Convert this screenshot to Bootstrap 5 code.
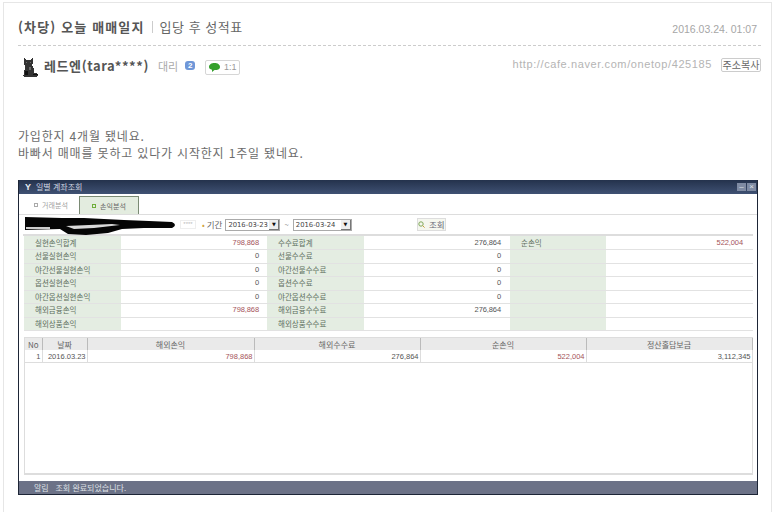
<!DOCTYPE html>
<html lang="ko">
<head>
    <meta charset="UTF-8">
    <title>(차당) 오늘 매매일지</title>
    <link href="https://cdn.jsdelivr.net/npm/bootstrap@5.3.0/dist/css/bootstrap.min.css" rel="stylesheet">
    <style>
        html, body { height: 512px; overflow: hidden; background: #fff; }
        body { font-family: "Noto Sans CJK KR", "Liberation Sans", sans-serif; font-size: 12px; color: #666; }

        /* post frame */
        .post-frame { margin: 2px 4px 0 3px; height: 510px; padding: 0 10px 0 14px; border: 1px solid #e6e6e6; border-bottom: 0; overflow: hidden; }
        .post-head { height: 43px; padding-top: 5px; border-bottom: 1px dashed #ccc; line-height: 20px; }
        .post-title { font-size: 13px; font-weight: 700; color: #555; letter-spacing: 1.15px; }
        .post-sep { width: 1px; height: 12px; margin: 0 7px 0 7px; background: #ccc; }
        .post-cat { font-size: 13px; color: #666; letter-spacing: .5px; }
        .post-date { font-family: "Liberation Sans", sans-serif; font-size: 10.5px; color: #a6a6a6; padding-right: 4px; margin-top: 4px; }
        .author-row { height: 38px; padding-top: 11px; }
        .author-name { margin-left: 3px; font-size: 13px; font-weight: 700; color: #555; letter-spacing: .6px; line-height: 18px; }
        .author-rank { margin-left: 9px; font-size: 11px; color: #aaa; line-height: 18px; }
        .rank-badge { width: 10px; height: 9px; margin-left: 7px; margin-top: 4px; border-radius: 3px; background: #6f97d8; color: #fff; font: 700 8px/9px "Liberation Sans", sans-serif; text-align: center; }
        .chat-btn { margin-left: 10px; margin-top: 3px; width: 35px; height: 15px; border: 1px solid #d6d6d6; border-radius: 2px; font: 9px/13px "Liberation Sans", sans-serif; color: #999; }
        .post-url { font-family: "Liberation Sans", sans-serif; font-size: 11px; color: #b4b4b4; letter-spacing: .6px; line-height: 14px; }
        .copy-btn { margin-left: 9px; margin-top: 1px; width: 40px; height: 14px; border: 1px solid #ccc; border-radius: 2px; font-size: 10px; line-height: 12px; text-align: center; color: #666; }
        .post-body { margin-top: 43px; font-size: 12px; line-height: 17px; color: #6c6c6c; letter-spacing: .82px; }

        /* trading window */
        .trade-win { position: relative; width: 740px; height: 315px; margin-top: 19px; border: 1px solid #1d2536; border-width: 0 1px 1px 1px; background: #fff; font-size: 8px; color: #666; }
        .win-title { height: 14px; padding: 0 1px 0 5px; background: linear-gradient(#24324c, #3f5173); color: #cfd5e0; line-height: 14px; }
        .win-logo { width: 8px; height: 8px; margin-right: 4px; color: #e8ecf4; font: 700 9px/8px "Liberation Sans", sans-serif; text-align: center; }
        .win-ctl { width: 9px; height: 8px; margin-left: 1px; background: #7f8ba3; color: #dfe3ea; font: 8px/8px "Liberation Sans", sans-serif; text-align: center; }
        .win-tabs { height: 21px; padding: 2px 0 0 4px; border-bottom: 1px solid #ddd; }
        .win-tab { width: 56px; height: 18px; line-height: 18px; color: #a0a0a0; text-align: center; font-size: 7px; }
        .win-tab-on { width: 60px; border: 1px solid #7a8a74; border-width: 1px 1px 0 1px; background: #e3ecdf; color: #666; }
        .tab-dot { display: inline-block; width: 4px; height: 4px; margin-right: 4px; border: 1px solid #aaa; vertical-align: 1px; }
        .win-tab-on .tab-dot { border-color: #6fae3a; }
        .win-tools { position: relative; height: 21px; margin: 0 4px; padding-left: 157px; border-bottom: 2px solid #ddd; }
        .mask-box { width: 16px; height: 9px; margin-right: 6px; color: #bbb; font: 6px/7px "Liberation Sans", sans-serif; text-align: center; border: 1px solid #eee; }
        .period-dot { color: #d0a23a; margin-right: 2px; }
        .tools-label { margin-right: 3px; font-size: 8.5px; }
        .date-box { width: 55px; height: 12px; padding-left: 2px; border: 1px solid #aaa; font: 6.8px/10px "DejaVu Sans", sans-serif; color: #444; }
        .date-box-b { width: 59px; }
        .date-arrow { width: 10px; height: 10px; background: #eee; border-right: 1px solid #777; border-bottom: 1px solid #777; font-size: 5px; line-height: 9px; text-align: center; color: #111; }
        .tools-tilde { margin: 0 4px; }
        .search-btn { margin-left: 65px; width: 29px; height: 13px; border: 1px solid #ddd; background: #f5f7ef; line-height: 11px; font-size: 8.5px; color: #667; }
        .scribble { position: absolute; left: 1px; top: 2px; }

        .sum-table { table-layout: fixed; width: 729px; margin: 0 0 0 5px; border-collapse: collapse; font-size: 7.5px; }
        .sum-table td { height: 13.5px; padding: 0; border-bottom: 1px solid #e2e2e2; line-height: 12px; white-space: nowrap; }
        .sum-label { background: #e4ede2; padding-left: 11px !important; color: #5f6f5f; letter-spacing: .02px; }
        .sum-val { text-align: right; padding-right: 3px !important; font-family: "Liberation Sans", sans-serif; font-size: 7.5px; letter-spacing: -.1px; color: #555; }
        .sum-val-b { padding-right: 4px !important; }
        .sum-val-c { padding-right: 10px !important; }
        .loss { color: #a5545a !important; }

        .grid-wrap { height: 138px; margin: 6px 4px 0 5px; border: 1px solid #ddd; border-bottom: 2px solid #ddd; }
        .grid-table { table-layout: fixed; width: 727px; border-collapse: collapse; }
        .grid-table th { height: 12px; padding: 0; background: #eaeaea; border-right: 1px solid #bbb; font-weight: 400; text-align: center; line-height: 11px; color: #666; }
        .grid-table td { height: 12.5px; padding: 0 1px; border-right: 1px solid #ddd; border-bottom: 1px solid #ddd; text-align: right; line-height: 11px; font-family: "Liberation Sans", sans-serif; font-size: 7.5px; color: #555; }
        .win-status { position: absolute; left: 0; right: 0; bottom: 0; height: 13px; padding-left: 15px; background: #6c7287; color: #dfe1e6; line-height: 13px; }
    </style>
</head>
<body>

<div class="post-frame">
    <div class="post-head d-flex align-items-center justify-content-between">
        <div class="d-flex align-items-center">
            <span class="post-title">(차당) 오늘 매매일지</span>
            <span class="post-sep"></span>
            <span class="post-cat">입당 후 성적표</span>
        </div>
        <span class="post-date">2016.03.24. 01:07</span>
    </div>

    <div class="author-row d-flex justify-content-between">
        <div class="d-flex align-items-start">
            <svg width="23" height="20" viewBox="0 0 23 20" shape-rendering="crispEdges">
                <path fill="#333" d="M6 1h1v1h1v1h5V2h1V1h1v6h-1v2h1v2h1v5h3v1h1v2h-1v1H6v-1H5v-1h1v-5h1V8H6z"/>
                <path fill="#111" d="M7 14h3v4H7zM15 17h5v1h-5z"/>
                <path fill="#6a6a6a" d="M8 5h1v1H8zM12 5h1v1h-1zM11 10h2v3h-2z"/>
            </svg>
            <span class="author-name">레드엔(tara****)</span>
            <span class="author-rank">대리</span>
            <span class="rank-badge">2</span>
            <span class="chat-btn d-flex align-items-center justify-content-center gap-1">
                <svg width="11" height="9" viewBox="0 0 11 9"><path fill="#35a02c" d="M5.500 0C8.500 0 11 1.500 11 4S8.500 7 5.500 7L3 9V6.700C1 6.200 0 5.300 0 4 0 1.500 2.500 0 5.500 0z"/></svg>
                <span>1:1</span>
            </span>
        </div>
        <div class="d-flex align-items-start">
            <span class="post-url">http://cafe.naver.com/onetop/425185</span>
            <span class="copy-btn">주소복사</span>
        </div>
    </div>

    <div class="post-body">
        <div>가입한지 4개월 됐네요.</div>
        <div>바빠서 매매를 못하고 있다가 시작한지 1주일 됐네요.</div>
    </div>

    <div class="trade-win">
        <div class="win-title d-flex align-items-center">
            <span class="win-logo">Y</span>
            <span class="flex-grow-1">일별 계좌조회</span>
            <span class="win-ctl">–</span>
            <span class="win-ctl">×</span>
        </div>
        <div class="win-tabs d-flex">
            <div class="win-tab"><span class="tab-dot"></span>거래분석</div>
            <div class="win-tab win-tab-on"><span class="tab-dot"></span>손익분석</div>
        </div>
        <div class="win-tools d-flex align-items-center">
            <svg class="scribble" width="152" height="20" viewBox="0 0 152 20">
                <path fill="#050505" d="M1 0 L38 1 L60 1 L100 3 L125 4 L148 5 Q154 8 148 11 L120 11 L98 12 L84 16 L62 18 L44 17 L36 12 L1 13z"/>
                <path fill="#fff" d="M42 9 L88 7 L96 8 L70 11 L50 12z" opacity=".85"/>
                <path fill="#fff" d="M2 10h24v2H2z" opacity=".8"/>
            </svg>
            <span class="mask-box">****</span>
            <span class="period-dot">•</span>
            <span class="tools-label">기간</span>
            <span class="date-box d-flex justify-content-between"><span>2016-03-23</span><span class="date-arrow">▼</span></span>
            <span class="tools-tilde">~</span>
            <span class="date-box date-box-b d-flex justify-content-between"><span>2016-03-24</span><span class="date-arrow">▼</span></span>
            <span class="search-btn d-flex align-items-center justify-content-center gap-1">
                <svg width="7" height="7" viewBox="0 0 7 7"><circle cx="3" cy="3" r="2.200" fill="none" stroke="#7fa85a"/><path d="M4.600 4.600L6.600 6.600" stroke="#c9a23a"/></svg>
                <span>조회</span>
            </span>
        </div>
        <table class="sum-table" id="sumTable"></table>
        <div class="grid-wrap">
            <table class="grid-table">
                <colgroup>
                    <col style="width:17px"><col style="width:45px"><col style="width:167px"><col style="width:166px"><col style="width:166px"><col style="width:166px">
                </colgroup>
                <tr><th>No</th><th>날짜</th><th>해외손익</th><th>해외수수료</th><th>순손익</th><th>정산홀담보금</th></tr>
                <tr><td>1</td><td>2016.03.23</td><td class="loss">798,868</td><td>276,864</td><td class="loss">522,004</td><td>3,112,345</td></tr>
            </table>
        </div>
        <div class="win-status">알림 &nbsp; 조회 완료되었습니다.</div>
    </div>
</div>

<script src="https://cdn.jsdelivr.net/npm/bootstrap@5.3.0/dist/js/bootstrap.bundle.min.js"></script>
<script>
    const rows = [
        ["실현손익합계", "798,868", "수수료합계", "276,864", "순손익", "522,004"],
        ["선물실현손익", "0", "선물수수료", "0", "", ""],
        ["야간선물실현손익", "0", "야간선물수수료", "0", "", ""],
        ["옵션실현손익", "0", "옵션수수료", "0", "", ""],
        ["야간옵션실현손익", "0", "야간옵션수수료", "0", "", ""],
        ["해외금융손익", "798,868", "해외금융수수료", "276,864", "", ""],
        ["해외상품손익", "", "해외상품수수료", "", "", ""],
    ];
    const widths = [97, 141, 5, 97, 141, 5, 96, 147];
    document.getElementById("sumTable").innerHTML =
        "<colgroup>" + widths.map(w => `<col style="width:${w}px">`).join("") + "</colgroup>" +
        rows.map(r => {
            const red = r[1].includes(",") ? " loss" : "";
            return `<tr>
                <td class="sum-label">${r[0]}</td><td class="sum-val${red}">${r[1]}</td><td></td>
                <td class="sum-label">${r[2]}</td><td class="sum-val sum-val-b">${r[3]}</td><td></td>
                <td class="sum-label">${r[4]}</td><td class="sum-val sum-val-c loss">${r[5]}</td>
            </tr>`;
        }).join("");
</script>
</body>
</html>
